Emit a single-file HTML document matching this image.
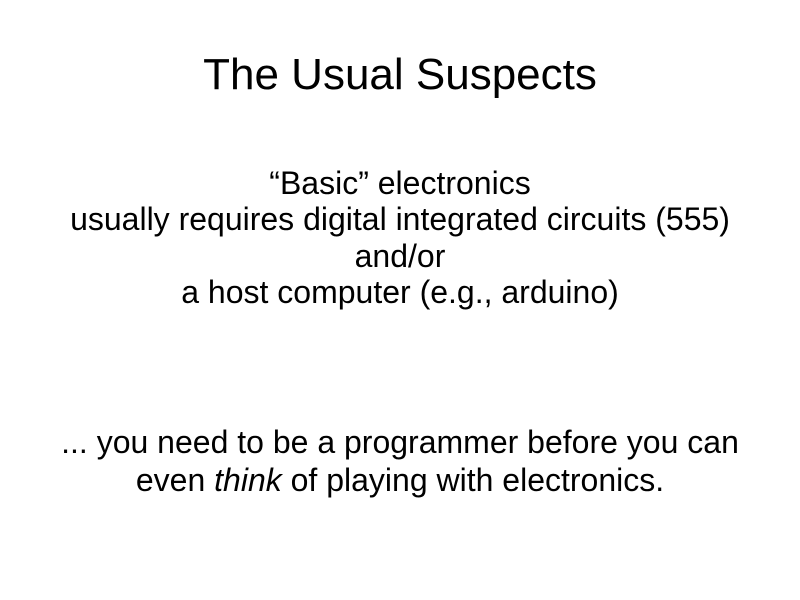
<!DOCTYPE html>
<html><head><meta charset="utf-8"><style>
html,body{margin:0;padding:0;background:#fff;width:800px;height:600px;overflow:hidden}
body{font-family:"Liberation Sans",sans-serif;color:#000;position:relative}
.t{position:absolute;left:0;width:800px;text-align:center;white-space:nowrap}
</style></head><body>
<div class="t" style="top:49px;font-size:44px;line-height:52px">The Usual Suspects</div>
<div class="t" style="top:165px;font-size:32px;line-height:36.3px">“Basic” electronics<br>usually requires digital integrated circuits (555)<br>and/or<br>a host computer (e.g., arduino)</div>
<div class="t" style="top:423px;font-size:32px;line-height:38px">... you need to be a programmer before you can<br>even <i>think</i> of playing with electronics.</div>
</body></html>
